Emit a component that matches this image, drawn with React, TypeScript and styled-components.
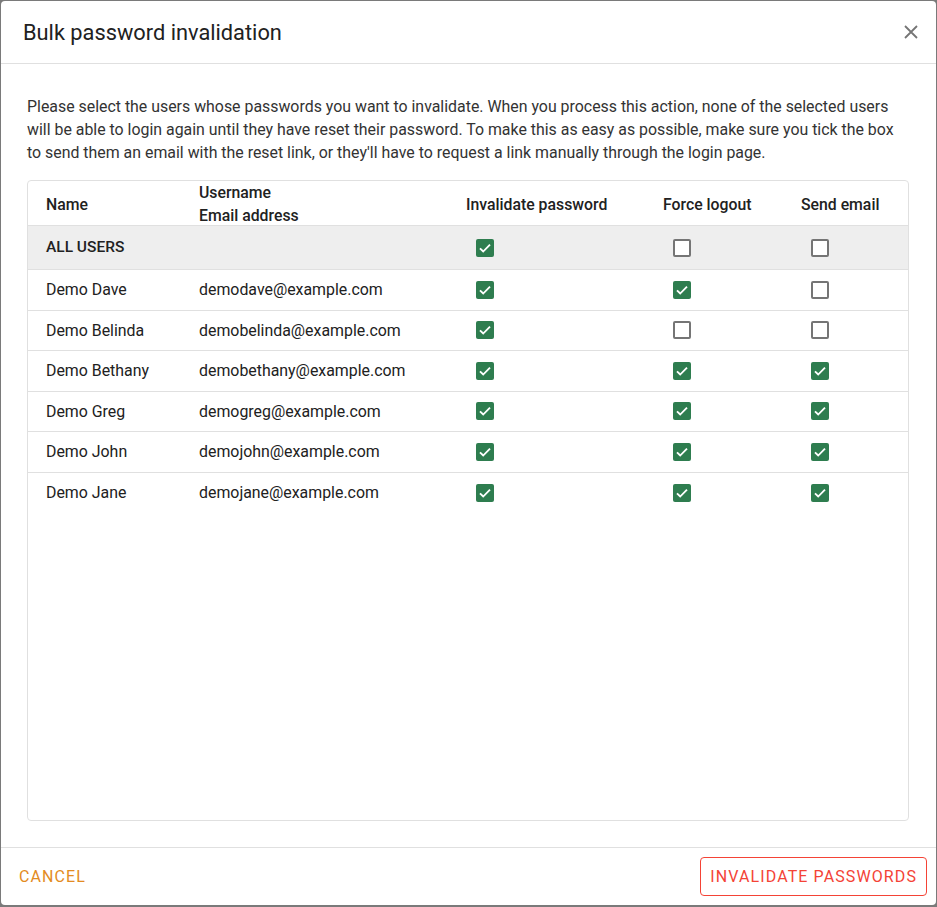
import styled, {createGlobalStyle} from "styled-components";
import {useState} from "react";

const GlobalStyle = createGlobalStyle`
  html, body {
    margin: 0;
    padding: 0;
    background: #7a7a7a;
  }
  body {
    font-family: Roboto, "Liberation Sans", Arial, sans-serif;
    color: #212121;
  }
`

const Dialog = styled.div`
  margin: 1px;
  width: 935px;
  height: 904px;
  box-sizing: border-box;
  background: #fff;
  border-radius: 4px;
  display: flex;
  flex-direction: column;
  overflow: hidden;
`
const Header = styled.div`
  height: 62px;
  flex-shrink: 0;
  display: flex;
  align-items: center;
  justify-content: space-between;
  padding: 0 13px 0 22px;
  border-bottom: 1px solid #e0e0e0;
`
const Title = styled.h2`
  margin: 0;
  font-size: 21.8px;
  font-weight: 400;
  color: #212121;
`
const CloseButton = styled.button`
  border: none;
  background: none;
  padding: 0;
  width: 24px;
  height: 24px;
  display: flex;
  align-items: center;
  justify-content: center;
  cursor: pointer;
`
const Content = styled.div`
  flex: 1;
  display: flex;
  flex-direction: column;
  padding: 31px 27px 26px 26px;
  min-height: 0;
`
const Intro = styled.p`
  margin: 0 0 16px;
  font-size: 15.9px;
  line-height: 23px;
  color: #333;
`
const TableWrap = styled.div`
  flex: 1;
  border: 1px solid #e0e0e0;
  border-radius: 4px;
`
const Row = styled.div<{ $head?: boolean; $shade?: boolean; $last?: boolean }>`
  display: grid;
  grid-template-columns: 153px 267px 197px 138px 1fr;
  align-items: center;
  height: ${p => p.$head ? 45 : p.$shade ? 44 : 40.5}px;
  padding-bottom: ${p => p.$head ? 4 : 0}px;
  background: ${p => p.$shade ? '#eeeeee' : 'transparent'};
  border-bottom: ${p => p.$last ? 'none' : '1px solid #e0e0e0'};
  box-sizing: border-box;
  font-size: ${p => p.$head ? 15.8 : 15.9}px;
  font-weight: ${p => p.$head ? 500 : 400};
  color: #212121;
`
const Cell = styled.div<{ $strong?: boolean }>`
  padding-left: 18px;
  line-height: 23px;
  font-weight: ${p => p.$strong ? 500 : 'inherit'};
  font-size: ${p => p.$strong ? '15.5px' : 'inherit'};
  white-space: nowrap;
`
const CheckCell = styled.div`
  padding-left: 28px;
  display: flex;
  align-items: center;
`
const Box = styled.span<{ $on: boolean }>`
  width: 18px;
  height: 18px;
  box-sizing: border-box;
  border-radius: 2px;
  border: ${p => p.$on ? 'none' : '2px solid #757575'};
  background: ${p => p.$on ? '#2e7d4f' : '#fff'};
  display: flex;
  align-items: center;
  justify-content: center;
  cursor: pointer;
`
const Footer = styled.div`
  height: 57px;
  flex-shrink: 0;
  border-top: 1px solid #e0e0e0;
  display: flex;
  align-items: center;
  justify-content: space-between;
  padding: 0 9px 0 18px;
`
const TextButton = styled.button<{ $outlined?: boolean }>`
  font-family: Roboto, "Liberation Sans", Arial, sans-serif;
  font-size: 16px;
  letter-spacing: 1.1px;
  text-transform: uppercase;
  background: #fff;
  cursor: pointer;
  color: ${p => p.$outlined ? '#f44336' : '#e38b22'};
  border: ${p => p.$outlined ? '1px solid #f44336' : 'none'};
  border-radius: 4px;
  height: 39px;
  padding: ${p => p.$outlined ? '0 9px' : '0'};
`

type User = { name: string; email: string; inv: boolean; logout: boolean; mail: boolean }

const initialUsers: User[] = [
    {name: 'Demo Dave', email: 'demodave@example.com', inv: true, logout: true, mail: false},
    {name: 'Demo Belinda', email: 'demobelinda@example.com', inv: true, logout: false, mail: false},
    {name: 'Demo Bethany', email: 'demobethany@example.com', inv: true, logout: true, mail: true},
    {name: 'Demo Greg', email: 'demogreg@example.com', inv: true, logout: true, mail: true},
    {name: 'Demo John', email: 'demojohn@example.com', inv: true, logout: true, mail: true},
    {name: 'Demo Jane', email: 'demojane@example.com', inv: true, logout: true, mail: true},
]

const Check = (props: { on: boolean, onClick?: () => void }) =>
    <Box $on={props.on} onClick={props.onClick}>
        {props.on &&
            <svg width="16" height="16" viewBox="0 0 24 24">
                <path d="M4.5 12.5l4.8 4.8L19.5 7" fill="none" stroke="#fff" strokeWidth="2.8"/>
            </svg>}
    </Box>

const App = () => {
    const [users, setUsers] = useState(initialUsers)
    const toggle = (i: number, key: 'inv' | 'logout' | 'mail') =>
        setUsers(us => us.map((u, j) => j === i ? {...u, [key]: !u[key]} : u))
    // ALL USERS row starts from this fixed state, as in the screen
    const [allState, setAllState] = useState({inv: true, logout: false, mail: false})
    const toggleAll = (key: 'inv' | 'logout' | 'mail') => {
        const v = !allState[key]
        setAllState(s => ({...s, [key]: v}))
        setUsers(us => us.map(u => ({...u, [key]: v})))
    }
    return <>
        <GlobalStyle/>
        <Dialog>
            <Header>
                <Title>Bulk password invalidation</Title>
                <CloseButton aria-label="close">
                    <svg width="14" height="14" viewBox="0 0 14 14">
                        <path d="M1 1L13 13M13 1L1 13" stroke="#757575" strokeWidth="1.8"/>
                    </svg>
                </CloseButton>
            </Header>
            <Content>
                <Intro>
                    Please select the users whose passwords you want to invalidate. When you process this action,
                    none of the selected users will be able to login again until they have reset their password. To
                    make this as easy as possible, make sure you tick the box to send them an email with the reset
                    link, or they'll have to request a link manually through the login page.
                </Intro>
                <TableWrap>
                    <Row $head>
                        <Cell>Name</Cell>
                        <Cell>Username<br/>Email address</Cell>
                        <Cell>Invalidate password</Cell>
                        <Cell>Force logout</Cell>
                        <Cell>Send email</Cell>
                    </Row>
                    <Row $shade>
                        <Cell $strong>ALL USERS</Cell>
                        <Cell/>
                        <CheckCell><Check on={allState.inv} onClick={() => toggleAll('inv')}/></CheckCell>
                        <CheckCell><Check on={allState.logout} onClick={() => toggleAll('logout')}/></CheckCell>
                        <CheckCell><Check on={allState.mail} onClick={() => toggleAll('mail')}/></CheckCell>
                    </Row>
                    {users.map((u, i) =>
                        <Row key={u.email} $last={i === users.length - 1}>
                            <Cell>{u.name}</Cell>
                            <Cell>{u.email}</Cell>
                            <CheckCell><Check on={u.inv} onClick={() => toggle(i, 'inv')}/></CheckCell>
                            <CheckCell><Check on={u.logout} onClick={() => toggle(i, 'logout')}/></CheckCell>
                            <CheckCell><Check on={u.mail} onClick={() => toggle(i, 'mail')}/></CheckCell>
                        </Row>
                    )}
                </TableWrap>
            </Content>
            <Footer>
                <TextButton>Cancel</TextButton>
                <TextButton $outlined>Invalidate passwords</TextButton>
            </Footer>
        </Dialog>
    </>
}

export default App
